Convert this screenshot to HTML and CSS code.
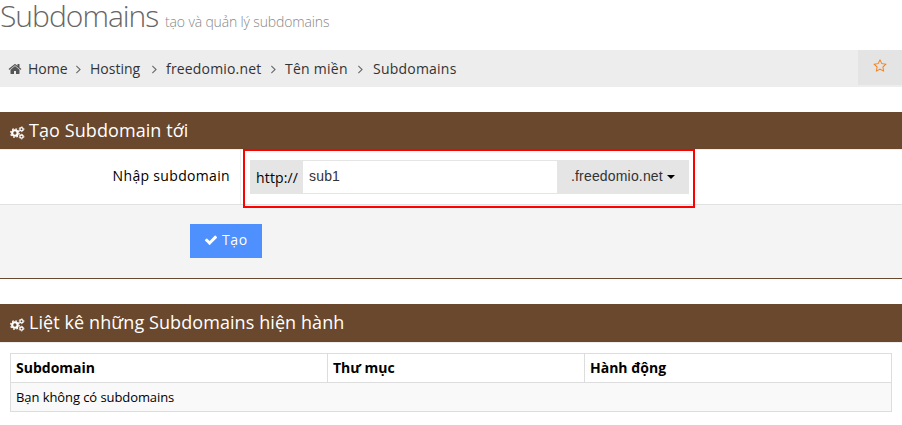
FILE: index.html
```html
<!DOCTYPE html>
<html lang="vi">
<head>
<meta charset="utf-8">
<title>Subdomains</title>
<link rel="stylesheet" href="styles.css">
</head>
<body>
<svg class="defs" aria-hidden="true">
  <symbol id="home" viewBox="0 0 1792 1792"><path d="M1472 992v480q0 26-19 45t-45 19h-384v-384h-256v384h-384q-26 0-45-19t-19-45v-480q0-1 .5-3t.5-3l575-474 575 474q1 2 1 6zm223-69l-62 74q-8 9-21 11h-3q-13 0-21-7l-692-577-692 577q-12 8-24 7-13-2-21-11l-62-74q-8-10-7-23.5t11-21.5l719-599q32-26 76-26t76 26l244 204v-195q0-14 9-23t23-9h192q14 0 23 9t9 23v408l219 182q10 8 11 21.5t-7 23.5z"/></symbol>
  <symbol id="angle" viewBox="576 0 640 1792"><path d="M1171 960q0 13-10 23l-466 466q-10 10-23 10t-23-10l-50-50q-10-10-10-23t10-23l393-393-393-393q-10-10-10-23t10-23l50-50q10-10 23-10t23 10l466 466q10 10 10 23z"/></symbol>
  <symbol id="star" viewBox="0 0 1792 1792"><path d="M1201 1004l306-297-422-62-189-382-189 382-422 62 306 297-73 421 378-199 377 199zm527-357q0 22-26 48l-363 354 86 500q1 7 1 20 0 50-41 50-19 0-40-12l-449-236-449 236q-22 12-40 12-21 0-31.500-14.500t-10.500-35.500q0-6 2-20l86-500-364-354q-25-27-25-48 0-37 56-46l502-73 225-455q19-41 49-41t49 41l225 455 502 73q56 9 56 46z"/></symbol>
  <symbol id="check" viewBox="0 0 1792 1792"><path d="M1671 566q0 40-28 68l-724 724-136 136q-28 28-68 28t-68-28l-136-136-362-362q-28-28-28-68t28-68l136-136q28-28 68-28t68 28l294 295 656-657q28-28 68-28t68 28l136 136q28 28 28 68z"/></symbol>
  <symbol id="cogs" viewBox="0 0 15 14">
    <g fill="none" stroke="currentColor">
      <circle cx="4.900" cy="7" r="2.750" stroke-width="2.200"/>
      <circle cx="4.900" cy="7" r="4.250" stroke-width="1.300" stroke-dasharray="1.670 1.670"/>
      <circle cx="11.500" cy="3.200" r="1.600" stroke-width="1.300"/>
      <circle cx="11.500" cy="3.200" r="2.400" stroke-width=".8" stroke-dasharray="1.250 1.250"/>
      <circle cx="11.500" cy="10.600" r="1.600" stroke-width="1.300"/>
      <circle cx="11.500" cy="10.600" r="2.400" stroke-width=".8" stroke-dasharray="1.250 1.250"/>
    </g>
  </symbol>
</svg>

<h3 class="page-title">Subdomains <small>tạo và quản lý subdomains</small></h3>

<nav class="breadcrumb">
  <svg class="home"><use href="#home"/></svg>
  <a class="c1">Home</a><svg class="angle"><use href="#angle"/></svg>
  <a class="c2">Hosting</a><svg class="angle"><use href="#angle"/></svg>
  <a class="c3">freedomio.net</a><svg class="angle"><use href="#angle"/></svg>
  <a class="c4">Tên miền</a><svg class="angle last"><use href="#angle"/></svg>
  <a class="c5">Subdomains</a>
  <span class="favorite"><svg><use href="#star"/></svg></span>
</nav>

<section class="portlet create">
  <h4 class="caption"><svg><use href="#cogs"/></svg><span>Tạo Subdomain tới</span></h4>
  <div class="form-row">
    <label class="label">Nhập subdomain</label>
    <div class="field">
      <div class="input-group">
        <span class="addon">http://</span>
        <span class="input">sub1</span>
        <span class="domain">.freedomio.net<i class="caret"></i></span>
      </div>
      <div class="highlight"></div>
    </div>
  </div>
  <div class="actions">
    <span class="submit"><svg><use href="#check"/></svg>Tạo</span>
  </div>
</section>

<section class="portlet list">
  <h4 class="caption"><svg><use href="#cogs"/></svg><span>Liệt kê những Subdomains hiện hành</span></h4>
  <table class="table">
    <thead><tr><th class="col-name">Subdomain</th><th class="col-dir">Thư mục</th><th>Hành động</th></tr></thead>
    <tbody><tr><td colspan="3">Bạn không có subdomains</td></tr></tbody>
  </table>
</section>
</body>
</html>
```
FILE: styles.css
```css
* { box-sizing: border-box; }
body {
  margin: 0;
  width: 902px;
  height: 425px;
  overflow: hidden;
  background: #fff;
  color: #000;
  font: 14px/20px "Open Sans", sans-serif;
}
svg { display: block; fill: currentColor; flex: none; }
.defs { display: none; }

.page-title {
  margin: 0;
  height: 50px;
  font-size: 30px;
  line-height: 32px;
  font-weight: 300;
  letter-spacing: -1px;
  color: #666;
  white-space: nowrap;
}
.page-title small {
  font-size: 14px;
  font-weight: 300;
  letter-spacing: -.15px;
  color: #888;
}

.breadcrumb {
  display: flex;
  align-items: center;
  height: 37px;
  padding-left: 8px;
  background: #ededed;
  color: #333;
}
.breadcrumb a { white-space: nowrap; }
.breadcrumb .home { width: 14px; height: 14px; margin-right: 6px; color: #555; }
.breadcrumb .angle { width: 5px; height: 14px; margin-right: 9px; color: #666; }
.breadcrumb .last { margin-right: 10px; }
.c1 { width: 48px; }
.c2 { width: 62px; }
.c3 { width: 105px; letter-spacing: .17px; }
.c4 { width: 73px; letter-spacing: .25px; }
.c5 { letter-spacing: .22px; }
.favorite {
  display: flex;
  justify-content: center;
  align-self: flex-start;
  width: 44px;
  height: 35px;
  margin-left: auto;
  padding-top: 9px;
  background: #e4e4e4;
  color: #f58220;
}
.favorite svg { width: 14px; height: 14px; }

.portlet { margin-top: 25px; }
.caption {
  display: flex;
  align-items: center;
  height: 37px;
  margin: 0;
  padding-left: 10px;
  background: #6a482d;
  color: #fff;
  font-size: 18px;
  font-weight: 400;
  letter-spacing: .08px;
  white-space: nowrap;
}
.caption span { padding-bottom: 2px; }
.caption svg { width: 15px; height: 14px; margin: 4px 4px 0 0; }

.create { border-bottom: 1px solid #6a482d; }
.form-row { display: flex; height: 56px; border-top: 1px solid #eee; border-bottom: 1px solid #e1e1e1; }
.label { width: 240px; padding: 16px 10px 0 0; text-align: right; letter-spacing: .33px; }
.field { position: relative; flex: 1; padding: 10px 0 0 9px; border-left: 1px solid #eee; }
.highlight {
  position: absolute;
  left: 2px;
  top: -1px;
  width: 452px;
  height: 59px;
  border: 2px solid #f00;
}
.input-group { display: flex; width: 439px; height: 34px; }
.addon { width: 53px; padding: 8px 0 0 6px; background: #e5e5e5; letter-spacing: .15px; }
.input, .domain { font-family: "Liberation Sans", sans-serif; color: #333; letter-spacing: .17px; }
.input { flex: 1; padding: 5px 6px; border: solid #e5e5e5; border-width: 1px 0; }
.domain { display: flex; width: 132px; padding: 6px 0 0 14px; background: #e5e5e5; }
.caret { width: 0; height: 0; margin: 9px 0 0 4px; border: 4px solid transparent; border-top-color: #000; border-bottom: 0; }
.actions { height: 73px; padding: 19px 0 0 190px; background: #f4f4f4; }
.submit {
  display: flex;
  width: 72px;
  height: 34px;
  padding: 6px 0 0 14px;
  background: #4d90fe;
  color: #fff;
  letter-spacing: .6px;
}
.submit svg { width: 14px; height: 14px; margin: 3px 4px 0 0; }

.list .caption { height: 38px; }
.list { background: linear-gradient(#eee, #eee) 0 38px / 100% 1px no-repeat; }
.table {
  width: 882px;
  margin: 11px 0 0 10px;
  border-collapse: collapse;
  table-layout: fixed;
}
.table th, .table td { height: 29px; padding: 0 5px; border: 1px solid #ddd; text-align: left; }
.table td { background: #f9f9f9; font-size: 13px; letter-spacing: -.08px; }
.col-name { width: 317px; }
.col-dir { width: 257px; }
```
